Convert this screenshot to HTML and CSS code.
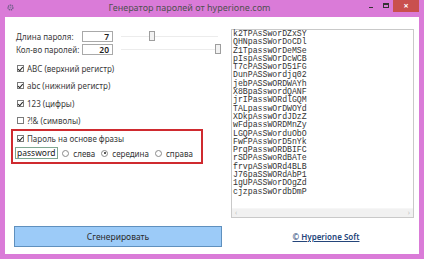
FILE: index.html
```html
<!DOCTYPE html>
<html>
<head>
    <title>Генератор паролей от hyperione.com</title>
    <meta charset="utf-8">
    <link rel="stylesheet" href="styles.css">
</head>
<body>
    <div class="pg-window">
        <!-- Title bar -->
        <div class="pg-titlebar">
            <div class="pg-title-icon">
                <svg width="7" height="7" viewBox="0 0 7 7">
                    <circle cx="3.5" cy="3.5" r="2.4" fill="none" stroke="#6f5b86" stroke-width="1.4" stroke-dasharray="1.3 0.6"/>
                    <circle cx="3.5" cy="3.5" r="0.9" fill="#8d7aa3"/>
                </svg>
            </div>
            <div class="pg-title">Генератор паролей от hyperione.com</div>
            <div class="pg-controls">
                <div class="pg-min"></div>
                <div class="pg-max"></div>
                <div class="pg-close">×</div>
            </div>
        </div>

        <div class="pg-client">
            <div class="pg-left">
                <div class="pg-row">
                    <span class="pg-label">Длина пароля:</span>
                    <div class="pg-num">7</div>
                    <div class="pg-slider">
                        <div class="pg-track"></div>
                        <div class="pg-thumb" style="left: 28px"></div>
                    </div>
                </div>
                <div class="pg-row">
                    <span class="pg-label">Кол-во паролей:</span>
                    <div class="pg-num">20</div>
                    <div class="pg-slider">
                        <div class="pg-track"></div>
                        <div class="pg-thumb" style="left: 94px"></div>
                    </div>
                </div>

                <div class="pg-checks">
                    <div class="pg-check"><span class="pg-box on"></span>ABC (верхний регистр)</div>
                    <div class="pg-check"><span class="pg-box on"></span>abc (нижний регистр)</div>
                    <div class="pg-check"><span class="pg-box on"></span>123 (цифры)</div>
                    <div class="pg-check"><span class="pg-box"></span>?!&amp; (символы)</div>
                </div>

                <div class="pg-phrase">
                    <div class="pg-check pg-phrase-title"><span class="pg-box on"></span>Пароль на основе фразы</div>
                    <div class="pg-phrase-row">
                        <div class="pg-phrase-input">password</div>
                        <div class="pg-radio"><span class="pg-dot"></span>слева</div>
                        <div class="pg-radio"><span class="pg-dot on"></span>середина</div>
                        <div class="pg-radio"><span class="pg-dot"></span>справа</div>
                    </div>
                </div>
            </div>

            <div class="pg-output">
                <div class="pg-lines">
                    <div>k2TPAsSworDZxSY</div>
                    <div>QHNpasSWorDoCDl</div>
                    <div>Z1TpasswOrDeMSe</div>
                    <div>pIspAsSWOrDcWCB</div>
                    <div>T7cPASSworD51FG</div>
                    <div>DunPASSwordjq02</div>
                    <div>jebPASSwORDWAYh</div>
                    <div>X8BpaSswordQANF</div>
                    <div>jrIPassWORdlGQM</div>
                    <div>TALpasswOrDWOYd</div>
                    <div>XDkpAsswOrdJDzZ</div>
                    <div>wFdpassWORDMnZy</div>
                    <div>LGQPAsSWorduObO</div>
                    <div>FwFPAssWorD5nYk</div>
                    <div>PrqPasswORDBIFC</div>
                    <div>rSDPAsSwoRdBATe</div>
                    <div>frvpASsWORd4BLB</div>
                    <div>J76paSSWORdAbP1</div>
                    <div>1gUPASSWorDOgZd</div>
                    <div>cjzpasSwOrdbDmP</div>
                </div>
                <div class="pg-hscroll">
                    <span>‹</span>
                    <span>›</span>
                </div>
            </div>

            <div class="pg-bottom-left">
                <button class="pg-generate">Сгенерировать</button>
            </div>
            <div class="pg-bottom-right">
                <a class="pg-link" href="#">© Hyperione Soft</a>
            </div>
        </div>
    </div>
</body>
</html>
```

FILE: styles.css
```css
* {
    box-sizing: border-box;
}

body {
    margin: 0;
    background: #da7bd8;
    font-family: "Segoe UI", "Noto Sans", "Liberation Sans", sans-serif;
    font-size: 8px;
    color: #3a3a3a;
}

.pg-window {
    width: 424px;
    height: 259px;
    background: #da7bd8;
    display: flex;
    flex-direction: column;
}

/* title bar */
.pg-titlebar {
    height: 17px;
    display: flex;
    align-items: flex-start;
}

.pg-title-icon {
    width: 7px;
    height: 7px;
    margin: 4px 0 0 7px;
    display: flex;
}

.pg-title {
    flex: 1;
    text-align: center;
    font-size: 9px;
    line-height: 16px;
    color: #505050;
    padding-right: 4px;
}

.pg-controls {
    display: flex;
    align-items: flex-start;
    margin-right: 5px;
}

.pg-min {
    width: 4px;
    height: 1px;
    background: #333;
    margin: 7px 0 0 0;
}

.pg-max {
    width: 6px;
    height: 5px;
    border: 1px solid #333;
    border-top-width: 2px;
    margin: 3px 0 0 10px;
}

.pg-close {
    width: 26px;
    height: 12px;
    margin-left: 4px;
    background: #c9504e;
    color: #fff;
    font-size: 9px;
    line-height: 12px;
    text-align: center;
    font-weight: bold;
}

/* client area */
.pg-client {
    height: 237px;
    margin: 0 5px;
    background: #fff;
    display: grid;
    grid-template-columns: 211px 183px;
    grid-template-rows: 189px auto;
    column-gap: 9px;
    row-gap: 8px;
    padding: 12px 0 0 6px;
}

.pg-left {
    padding-top: 1px;
}

.pg-row {
    height: 13px;
    display: flex;
    align-items: center;
    padding-left: 5px;
}

.pg-label {
    width: 66px;
    white-space: nowrap;
}

.pg-num {
    width: 31px;
    height: 11px;
    border: 1px solid #a9a9a9;
    text-align: right;
    padding-right: 3px;
    line-height: 9px;
    font-size: 8.5px;
    font-weight: 600;
    color: #222;
}

.pg-slider {
    position: relative;
    width: 100px;
    height: 11px;
    margin-left: 8px;
}

.pg-track {
    position: absolute;
    left: 0;
    right: 3px;
    top: 5px;
    height: 1px;
    background: #d6d6d6;
    border-bottom: 1px solid #ececec;
}

.pg-thumb {
    position: absolute;
    top: 0;
    width: 6px;
    height: 10px;
    background: #f2f2f2;
    border: 1px solid #9e9e9e;
}

/* checkboxes */
.pg-checks {
    margin-top: 4px;
}

.pg-check {
    height: 17.25px;
    display: flex;
    align-items: center;
    padding-left: 6px;
    white-space: nowrap;
}

.pg-box {
    width: 7px;
    height: 7px;
    border: 1px solid #7a7a7a;
    background: #fff;
    margin-right: 3px;
    position: relative;
    flex-shrink: 0;
}

.pg-box.on::after {
    content: "";
    position: absolute;
    left: 1px;
    top: 0px;
    width: 2px;
    height: 3.5px;
    border: solid #222;
    border-width: 0 1.3px 1.3px 0;
    transform: rotate(40deg);
}

/* phrase box */
.pg-phrase {
    width: 192px;
    height: 35px;
    border: 2px solid #cf2a2f;
    padding: 0 2px;
}

.pg-phrase-title {
    height: 14px;
    padding-left: 2px;
}

.pg-phrase-row {
    display: flex;
    align-items: center;
    margin-top: 2px;
}

.pg-phrase-input {
    width: 58px;
    height: 12px;
    border: 1px solid #7fa690;
    font-size: 8.5px;
    line-height: 10px;
    padding-left: 1px;
    color: #222;
    margin-right: 4px;
}

.pg-radio {
    display: flex;
    align-items: center;
    font-size: 8px;
    margin-right: 6px;
    color: #333;
}

.pg-dot {
    width: 7px;
    height: 7px;
    border: 1px solid #8a8a8a;
    border-radius: 50%;
    margin-right: 4px;
    position: relative;
}

.pg-dot.on::after {
    content: "";
    position: absolute;
    left: 1.5px;
    top: 1.5px;
    width: 2px;
    height: 2px;
    border-radius: 50%;
    background: #222;
}

/* output box */
.pg-output {
    border: 1px solid #c9c9c9;
    display: flex;
    flex-direction: column;
}

.pg-lines {
    flex: 1;
    padding: 0 0 0 1px;
    font-family: "Liberation Mono", "DejaVu Sans Mono", monospace;
    font-size: 8.2px;
    line-height: 8.3px;
    color: #333;
}

.pg-hscroll {
    height: 9px;
    background: #f1f1f1;
    border-top: 1px solid #f6f6f6;
    display: flex;
    justify-content: space-between;
    padding: 0 3px;
    font-size: 7px;
    line-height: 8px;
    color: #c4c4c4;
}

/* bottom */
.pg-bottom-left {
    padding-left: 3px;
}

.pg-generate {
    width: 208px;
    height: 21px;
    background: #9ccbf8;
    border: 1px solid #5f90be;
    font-family: inherit;
    font-size: 8.5px;
    color: #2a2a2a;
    padding: 0;
}

.pg-bottom-right {
    display: flex;
    justify-content: center;
    align-items: center;
    padding-left: 7px;
    height: 21px;
}

.pg-link {
    color: #24457a;
    font-size: 8px;
    font-weight: 600;
    text-decoration: underline;
}
```
